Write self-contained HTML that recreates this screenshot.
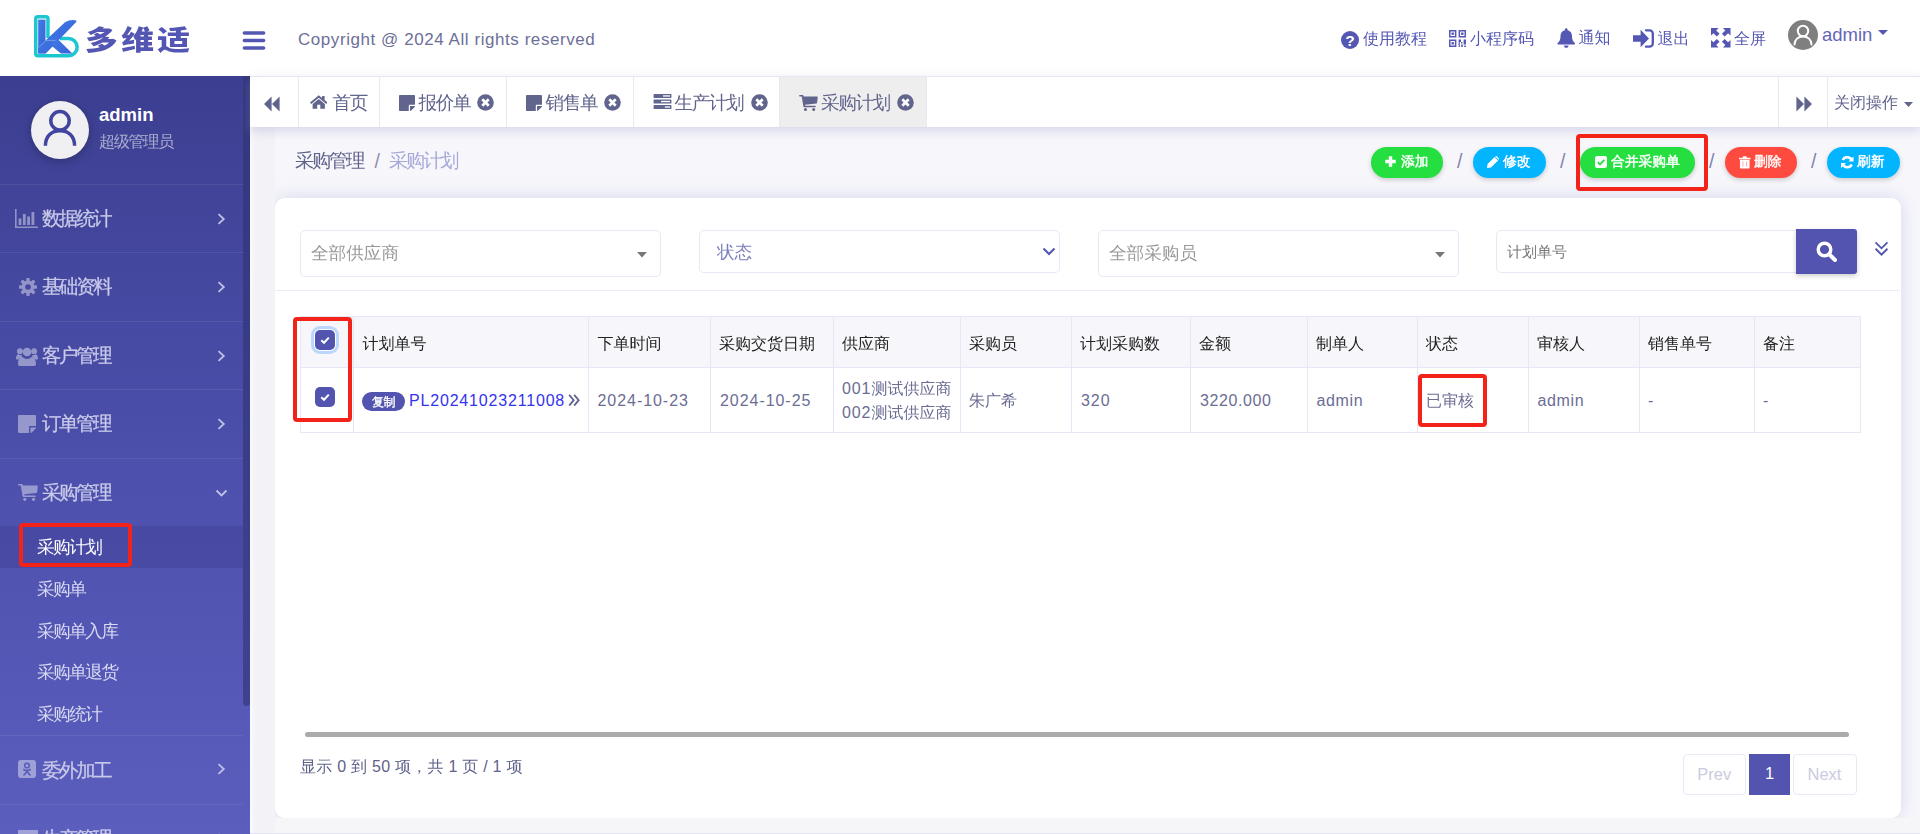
<!DOCTYPE html>
<html lang="zh-CN">
<head>
<meta charset="utf-8">
<title>采购计划</title>
<style>
*{box-sizing:border-box;margin:0;padding:0}
html,body{width:1920px;height:834px;overflow:hidden}
body{font-family:"Liberation Sans","WenQuanYi Zen Hei","Noto Sans CJK SC",sans-serif;background:#f3f2f6;color:#5b5d8a;position:relative}
.abs{position:absolute}
svg{display:block}
/* header */
#hdr{position:absolute;left:0;top:0;width:1920px;height:76px;background:#fff}
#logo-t{position:absolute;left:84.500px;top:20.500px;font-family:"Liberation Sans","Noto Sans CJK SC",sans-serif;font-weight:900;font-size:29px;line-height:40px;color:#5456b3;letter-spacing:3px;white-space:nowrap;transform-origin:0 50%;transform:scale(1.13,.94)}
#copy{position:absolute;left:298px;top:28px;font-size:17px;line-height:24px;color:#6d6f99;white-space:nowrap;letter-spacing:.56px}
.hl{position:absolute;top:27px;font-size:16px;line-height:24px;color:#5457b3;white-space:nowrap}
/* sidebar */
#side{position:absolute;left:0;top:76px;width:250px;height:758px;background:linear-gradient(180deg,#3c3e90 0%,#464aa2 33%,#5052b0 60%,#5b5ebd 100%);overflow:hidden}
#side .strip{position:absolute;left:243px;top:0;width:7px;height:630px;background:rgba(45,47,110,.55);border-radius:0 0 4px 4px}
.mi{position:absolute;left:0;width:243px;height:68.4px;border-top:1px solid rgba(255,255,255,.08)}
.mi .t{position:absolute;left:42px;top:20px;-webkit-text-stroke:.25px #c9caea;font-size:19.400px;letter-spacing:-2.300px;line-height:26px;color:#c9caea;white-space:nowrap}
.mi .ic{position:absolute;left:17px;top:24px}
.mi .ch{position:absolute;left:217px;top:27px}
.sub{position:absolute;left:37px;margin-top:0;font-size:17.600px;letter-spacing:-1.500px;line-height:22px;color:#d6d7f0;white-space:nowrap}
/* tabs */
#tabs{position:absolute;left:250px;top:76px;width:1670px;height:51px;background:#fff;border-top:1px solid #e6e6f5;box-shadow:0 4px 10px rgba(150,152,210,.35)}
.tb{position:absolute;top:0;height:50px;border-right:1px solid #e9e9f0;font-size:18.600px;letter-spacing:-1.400px;line-height:50px;color:#61648c;white-space:nowrap}
.tb .tx{position:absolute;top:1px}
/* crumbs */
#crumb{position:absolute;left:295px;top:148px;font-size:19.200px;letter-spacing:-2.100px;line-height:26px;color:#5f628a;white-space:nowrap}
.btn{position:absolute;top:147px;height:30.500px;border-radius:16px;color:#fff;font-size:13.750px;font-weight:bold;-webkit-text-stroke:.45px #fff;line-height:30px;white-space:nowrap;box-shadow:0 2px 5px rgba(0,0,0,.18)}
.btn span{position:absolute;top:0}
.sl{position:absolute;top:149.500px;font-size:19.500px;color:#8285ae;line-height:22px}
/* card */
#card{position:absolute;left:275px;top:197.500px;width:1625.500px;height:620px;background:#fff;border-radius:10px}
#clip{position:absolute;left:275px;top:127px;width:1645px;height:690.500px;overflow:hidden;background:#f7f7fb}
#below{position:absolute;left:275px;top:817.500px;width:1645px;height:16.500px;background:#f6f6f9}
#clip i{position:absolute;left:0;top:70.500px;width:1625.500px;height:620px;border-radius:10px;box-shadow:0 0 20px rgba(120,122,210,.26)}
#gut{position:absolute;left:250px;top:127px;width:25px;height:707px;background:linear-gradient(90deg,#fbfbfd 0,#f4f3f7 4px,#f3f2f6 8px)}
.inp{position:absolute;top:230px;height:45px;border:1px solid #e8e8f7;border-radius:5px;background:#fff;font-size:17px;line-height:43px;color:#999;white-space:nowrap}
table{border-collapse:collapse}
#tbl{position:absolute;left:300px;top:316px;width:1561px;font-size:16px}
.th{font-size:16px;line-height:24px;color:#222;white-space:nowrap}
.td{font-size:16px;line-height:24px;color:#6b6d94;white-space:nowrap}
.pg{top:754px;height:41px;line-height:39px;text-align:center;font-size:16.500px;border-radius:4px}
.redbox{position:absolute;border:4px solid #f4231a;border-radius:4px}
</style>
</head>
<body>
<div id="hdr">
<svg class="abs" style="left:30px;top:10px" width="52" height="52" viewBox="30 10 52 52">
<defs><linearGradient id="kg" x1="0" y1="0" x2="1" y2="1"><stop offset="0" stop-color="#3f7be6"/><stop offset="1" stop-color="#3a63d6"/></linearGradient></defs>
<path d="M47.950,38 V18.750 a2,2 0 0 0 -2,-2 h-8.200 a2,2 0 0 0 -2,2 v35.100 a2,2 0 0 0 2,2 H68.450 a8.700,8.700 0 0 0 0,-17.400 H60" fill="none" stroke="#1cc7d2" stroke-width="3.500" stroke-linejoin="round"/>
<rect x="38.200" y="19.600" width="7.300" height="33.800" fill="url(#kg)"/>
<path d="M38.200,53.400 V47.300 L65,22.300 Q70,19.300 76.300,20.400 Q76.800,21.300 76,22.300 L45.800,53.400 Z" fill="url(#kg)"/>
<path d="M50.500,45 L57,38.300 L72.300,53.400 H61 Z" fill="url(#kg)"/>
<path d="M38.500,47.600 L46,40.400 H55.500" fill="none" stroke="#9db8ef" stroke-width="0.600"/>
</svg>
<div id="logo-t">多维适</div>
<svg class="abs" style="left:242px;top:30px" width="24" height="21" viewBox="0 0 24 21"><g stroke="#5456b3" stroke-width="3.6" stroke-linecap="round"><path d="M2.4,3H21.6M2.4,10.5H21.6M2.4,18H21.6"/></g></svg>
<div id="copy">Copyright @ 2024 All rights reserved</div>
<svg class="abs" style="left:1341px;top:30.5px" width="18" height="18" viewBox="0 0 18 18"><circle cx="9" cy="9" r="9" fill="#5457b3"/><text x="9" y="14.500" text-anchor="middle" font-family="Liberation Sans,sans-serif" font-weight="bold" font-size="15.500" fill="#fff">?</text></svg>
<div class="hl" style="left:1363px">使用教程</div>
<svg class="abs" style="left:1449px;top:30px" width="17" height="17" viewBox="0 0 17 17" fill="#5457b3"><path d="M0,0h7.400v7.400h-7.400zM1.5,1.5v4.400h4.400v-4.400z" fill-rule="evenodd"/><rect x="2.5" y="2.5" width="2.400" height="2.400"/><path d="M9.6,0h7.400v7.400h-7.400zM11.1,1.5v4.400h4.400v-4.400z" fill-rule="evenodd"/><rect x="12.1" y="2.5" width="2.400" height="2.400"/><path d="M0,9.6h7.400v7.400h-7.400zM1.5,11.1v4.400h4.400v-4.400z" fill-rule="evenodd"/><rect x="2.5" y="12.1" width="2.400" height="2.400"/><path d="M9.600,9.600h2.400v2.400H9.600zM14.600,9.600h2.400v4.800h-2.400zM9.600,12h1.200v5H9.600zM12.200,14.400h1.600v2.600h-1.600zM15.200,15.600h1.800v1.400h-1.800zM12,12h1.400v1.400H12z"/></svg>
<div class="hl" style="left:1470px">小程序码</div>
<svg class="abs" style="left:1556.500px;top:27.500px" width="18.500" height="20" viewBox="0 0 19 20" fill="#5457b3"><path d="M9.500,0c0.800,0,1.400,0.600,1.400,1.400v0.600c2.900,0.700,4.500,3.100,4.500,6c0,3.800,1,5.700,2.900,7.200c0.500,0.400,0.300,1.500-0.500,1.500H1.200c-0.800,0-1-1.100-0.500-1.500c1.900-1.500,2.900-3.400,2.900-7.200c0-2.900,1.600-5.300,4.500-6V1.400C8.100,0.600,8.700,0,9.500,0z"/><path d="M7.200,17.600h4.600c0,1.300-1,2.400-2.300,2.400S7.200,18.900,7.200,17.600z"/></svg>
<div class="hl" style="left:1578.500px;top:25.500px">通知</div>
<svg class="abs" style="left:1632.500px;top:28.500px" width="21" height="19" viewBox="0 0 21 19"><path d="M0,6.300h7.600V0.800L16,9.500L7.600,18.200V12.700H0z" fill="#5457b3"/><path d="M13,1.300h3.500a3.300,3.300 0 0 1 3.300,3.300v9.800a3.300,3.300 0 0 1 -3.300,3.300H13" fill="none" stroke="#5457b3" stroke-width="2.300" stroke-linecap="round"/></svg>
<div class="hl" style="left:1657.500px">退出</div>
<svg class="abs" style="left:1711px;top:28px" width="19.500" height="19.500" viewBox="0 0 20 20" fill="#5457b3"><path d="M0,0H7.800L5.300,2.500L8.800,6L6,8.800L2.500,5.300L0,7.800z"/><g transform="translate(20,0) scale(-1,1)"><path d="M0,0H7.800L5.300,2.500L8.800,6L6,8.800L2.500,5.300L0,7.800z"/></g><g transform="translate(0,20) scale(1,-1)"><path d="M0,0H7.800L5.300,2.500L8.800,6L6,8.800L2.500,5.300L0,7.800z"/></g><g transform="translate(20,20) scale(-1,-1)"><path d="M0,0H7.800L5.300,2.500L8.800,6L6,8.800L2.500,5.300L0,7.800z"/></g></svg>
<div class="hl" style="left:1734px">全屏</div>
<svg class="abs" style="left:1788px;top:20px" width="30" height="30" viewBox="0 0 30 30"><circle cx="15" cy="15" r="15" fill="#7f7f7f"/><circle cx="15" cy="11" r="5.200" fill="none" stroke="#fff" stroke-width="2"/><path d="M6.500,24.500c0-5,3.800-8,8.500-8s8.500,3,8.500,8" fill="none" stroke="#fff" stroke-width="2" stroke-linecap="round"/></svg>
<div class="hl" style="left:1822px;top:22.500px;font-size:18.500px;color:#6466b8">admin</div>
<svg class="abs" style="left:1878px;top:30px" width="10" height="5" viewBox="0 0 10 5"><path d="M0,0h10L5,5z" fill="#5457b3"/></svg>
</div>
<div id="side">
<div class="strip"></div>
<svg class="abs" style="left:31px;top:25px;filter:drop-shadow(0 2px 4px rgba(0,0,0,.25))" width="58" height="58" viewBox="0 0 58 58"><circle cx="29" cy="29" r="29" fill="#f0f0f2"/><circle cx="29" cy="19.800" r="9.200" fill="none" stroke="#4245a0" stroke-width="3.500"/><path d="M14.400,44.700c0.200-9.800,6.200-15,14.600-15s14.400,5.200,14.600,15" fill="none" stroke="#4245a0" stroke-width="3.500" stroke-linecap="butt"/></svg>
<div class="abs" style="left:99px;top:26px;font-size:18.500px;font-weight:bold;line-height:26px;color:#fff">admin</div>
<div class="abs" style="left:99px;top:54px;font-size:16.200px;letter-spacing:-1.400px;line-height:22px;color:rgba(255,255,255,.55);white-space:nowrap">超级管理员</div>
<div class="mi" style="top:108px">
<svg class="ic" opacity=".42" style="left:15px;top:24px" width="23" height="19" viewBox="0 0 23 19" fill="#fff"><path d="M0,0h1.600v17.400H23V19H0z"/><rect x="3.600" y="9.500" width="2.800" height="6.500"/><rect x="7.900" y="5" width="2.800" height="11"/><rect x="12.200" y="7.500" width="2.800" height="8.500"/><rect x="16.500" y="3" width="2.800" height="13"/></svg>
<div class="t">数据统计</div>
<svg class="ch" style="left:217px;top:28px" width="9" height="12" viewBox="0 0 9 12"><path d="M1.500,1.200L6.800,6L1.500,10.800" fill="none" stroke="#bfc0e6" stroke-width="1.800"/></svg>
</div>
<div class="mi" style="top:176.4px">
<svg class="ic" opacity=".42" style="left:19px;top:25px" width="18" height="18" viewBox="0 0 18 18"><g fill="#fff"><circle cx="9" cy="9" r="6.400"/><g id="gt"><rect x="7.300" y="0" width="3.400" height="18" rx="0.800"/><rect x="7.300" y="0" width="3.400" height="18" rx="0.800" transform="rotate(45 9 9)"/><rect x="7.300" y="0" width="3.400" height="18" rx="0.800" transform="rotate(90 9 9)"/><rect x="7.300" y="0" width="3.400" height="18" rx="0.800" transform="rotate(135 9 9)"/></g></g><circle cx="9" cy="9" r="2.800" fill="#44479d"/></svg>
<div class="t">基础资料</div>
<svg class="ch" style="left:217px;top:28px" width="9" height="12" viewBox="0 0 9 12"><path d="M1.500,1.200L6.800,6L1.500,10.800" fill="none" stroke="#bfc0e6" stroke-width="1.800"/></svg>
</div>
<div class="mi" style="top:244.8px">
<svg class="ic" opacity=".42" style="left:16px;top:25px" width="22" height="19" viewBox="0 0 22 19" fill="#fff"><circle cx="11" cy="5" r="4.300"/><path d="M4,19c-1.300,0-2-0.800-2-2c0-3.800,1.800-7,4.500-7c1.200,1.200,2.800,1.900,4.500,1.900s3.300-0.700,4.500-1.900c2.700,0,4.500,3.200,4.500,7c0,1.200-0.700,2-2,2z"/><circle cx="3.900" cy="4.200" r="2.900"/><circle cx="18.100" cy="4.200" r="2.900"/><path d="M0,11.500c0-2.500,1-4.300,2.600-4.300c0.900,0.700,1.900,1,2.900,0.900c0,0.900,0.300,1.700,0.700,2.300c-1.500,0.100-2.700,0.900-3.500,2.100H1.500C0.600,12.500,0,12.200,0,11.500z"/><path d="M22,11.500c0-2.500-1-4.300-2.600-4.300c-0.900,0.700-1.900,1-2.900,0.900c0,0.900-0.300,1.700-0.700,2.300c1.500,0.100,2.700,0.900,3.500,2.100h1.200C21.400,12.500,22,12.200,22,11.500z"/></svg>
<div class="t">客户管理</div>
<svg class="ch" style="left:217px;top:28px" width="9" height="12" viewBox="0 0 9 12"><path d="M1.500,1.200L6.800,6L1.500,10.800" fill="none" stroke="#bfc0e6" stroke-width="1.800"/></svg>
</div>
<div class="mi" style="top:313.2px">
<svg class="ic" opacity=".42" style="left:18px;top:25px" width="18" height="18" viewBox="0 0 18 18" fill="#fff"><path d="M1.200,0h15.600c0.700,0,1.200,0.500,1.200,1.200V11h-5.800c-0.700,0-1.200,0.500-1.200,1.200V18H1.200C0.500,18,0,17.500,0,16.800V1.200C0,0.500,0.500,0,1.200,0z"/><path d="M12.400,12.400H18c-0.100,0.600-0.400,1.200-0.800,1.600l-3.200,3.200c-0.400,0.400-1,0.700-1.600,0.800z"/></svg>
<div class="t">订单管理</div>
<svg class="ch" style="left:217px;top:28px" width="9" height="12" viewBox="0 0 9 12"><path d="M1.500,1.200L6.800,6L1.500,10.800" fill="none" stroke="#bfc0e6" stroke-width="1.800"/></svg>
</div>
<div class="mi" style="top:381.6px">
<svg class="ic" opacity=".42" style="left:18px;top:25px" width="20" height="17" viewBox="0 0 20 17" fill="#fff"><path d="M0.700,0h3c0.700,0,0.900,0.500,1,1l0.100,0.500H19c0.600,0,0.900,0.400,0.800,0.900l-0.700,5.800c-0.100,0.500-0.400,0.700-0.800,0.800L6.300,10.300l0.200,1.200H17c0.500,0,0.800,0.300,0.800,0.750s-0.300,0.750-0.800,0.750H5.400c-0.400,0-0.700-0.300-0.800-0.700L2.800,1.500H0.700C0.300,1.500,0,1.200,0,0.750S0.300,0,0.700,0z"/><circle cx="6.800" cy="15.300" r="1.600"/><circle cx="15.500" cy="15.300" r="1.600"/></svg>
<div class="t">采购管理</div>
<svg class="ch" style="left:215px;top:30px" width="13" height="9" viewBox="0 0 13 9"><path d="M1.500,1.500L6.500,6.500L11.500,1.500" fill="none" stroke="#bfc0e6" stroke-width="1.800"/></svg>
</div>
<div class="mi" style="top:659.4px">
<svg class="ic" opacity=".42" style="left:18px;top:24px" width="18" height="18" viewBox="0 0 18 18"><rect width="18" height="18" rx="3" fill="#fff"/><circle cx="9" cy="5.600" r="2.300" fill="none" stroke="#595cba" stroke-width="1.500"/><path d="M5.800,9.500c2,1.400,4.400,1.400,6.400,0M9,10.800v1.200M9,11.500L6,15M9,11.500L12,15" fill="none" stroke="#595cba" stroke-width="1.600" stroke-linecap="round"/></svg>
<div class="t" style="top:21px">委外加工</div>
<svg class="ch" style="left:217px;top:27px" width="9" height="12" viewBox="0 0 9 12"><path d="M1.500,1.200L6.800,6L1.500,10.800" fill="none" stroke="#bfc0e6" stroke-width="1.800"/></svg>
</div>
<div class="mi" style="top:727.8px">
<svg class="ic" opacity=".42" style="left:18px;top:25px" width="20" height="17" viewBox="0 0 20 17" fill="#fff"><rect width="20" height="4"/><rect y="6" width="20" height="4"/><rect y="12" width="20" height="4"/></svg>
<div class="t">生产管理</div>
<svg class="ch" style="left:217px;top:28px" width="9" height="12" viewBox="0 0 9 12"><path d="M1.500,1.200L6.800,6L1.500,10.800" fill="none" stroke="#bfc0e6" stroke-width="1.800"/></svg>
</div>
<div class="abs" style="left:0;top:450px;width:243px;height:41.500px;background:rgba(40,42,110,.2)"></div>
<div class="sub" style="top:460.0px;color:#fff">采购计划</div>
<div class="sub" style="top:501.75px;color:#d9daf2">采购单</div>
<div class="sub" style="top:543.5px;color:#d9daf2">采购单入库</div>
<div class="sub" style="top:585.25px;color:#d9daf2">采购单退货</div>
<div class="sub" style="top:627.0px;color:#d9daf2">采购统计</div>
<div class="redbox" style="left:19px;top:446.500px;width:112.500px;height:44px"></div>
</div>
<div id="gut"></div><div id="clip"><i></i></div><div id="below"></div>
<div id="tabs">
<div class="tb" style="left:0;width:48.500px"><svg class="abs" style="left:13.500px;top:18.500px" width="16" height="16" viewBox="0 0 16 16" fill="#61648c"><path d="M7.600,0.500v15L0,8zM15.600,0.500v15L8,8z"/></svg></div>
<div class="tb" style="left:48.500px;width:81px"><svg class="abs" style="left:11px;top:18px" width="17.500" height="14" viewBox="0 0 18 14" fill="#61648c"><path d="M9,0L0,7.400l1.300,1.600L9,2.700l7.700,6.300l1.300-1.600L15,4.900V0.800h-2.600v2z"/><path d="M9,3.900L2.700,9.100V14h4.700v-4.100h3.200V14h4.700V9.100z"/></svg><span class="tx" style="left:34px">首页</span></div>
<div class="tb" style="left:129.500px;width:127px"><svg class="abs" style="left:19px;top:18px" width="16" height="16" viewBox="0 0 18 18" fill="#61648c"><path d="M1.200,0h15.600c0.700,0,1.200,0.500,1.200,1.200V11h-5.800c-0.700,0-1.200,0.500-1.200,1.200V18H1.200C0.500,18,0,17.500,0,16.800V1.200C0,0.500,0.500,0,1.200,0z"/><path d="M12.400,12.400H18c-0.100,0.600-0.400,1.200-0.800,1.600l-3.200,3.200c-0.400,0.400-1,0.700-1.600,0.800z"/></svg><span class="tx" style="left:39px">报价单</span><svg class="abs" style="left:97px;top:17px" width="17" height="17" viewBox="0 0 17 17"><circle cx="8.500" cy="8.500" r="8.300" fill="#61648c"/><path d="M5.300,5.300L11.700,11.700M11.700,5.300L5.300,11.700" stroke="#fff" stroke-width="2.700" stroke-linecap="butt"/></svg></div>
<div class="tb" style="left:256.500px;width:127px"><svg class="abs" style="left:19px;top:18px" width="16" height="16" viewBox="0 0 18 18" fill="#61648c"><path d="M1.200,0h15.600c0.700,0,1.200,0.500,1.200,1.200V11h-5.800c-0.700,0-1.200,0.500-1.200,1.200V18H1.200C0.500,18,0,17.500,0,16.800V1.200C0,0.500,0.500,0,1.200,0z"/><path d="M12.400,12.400H18c-0.100,0.600-0.400,1.200-0.800,1.600l-3.200,3.200c-0.400,0.400-1,0.700-1.600,0.800z"/></svg><span class="tx" style="left:39px">销售单</span><svg class="abs" style="left:97px;top:17px" width="17" height="17" viewBox="0 0 17 17"><circle cx="8.500" cy="8.500" r="8.300" fill="#61648c"/><path d="M5.300,5.300L11.700,11.700M11.700,5.300L5.300,11.700" stroke="#fff" stroke-width="2.700" stroke-linecap="butt"/></svg></div>
<div class="tb" style="left:383.500px;width:146.500px"><svg class="abs" style="left:19px;top:17px" width="19" height="15" viewBox="0 0 19 16" fill="#61648c"><rect width="19" height="4.200" rx="0.600"/><rect y="5.900" width="19" height="4.200" rx="0.600"/><rect y="11.800" width="19" height="4.200" rx="0.600"/><rect x="10" y="1.400" width="7.500" height="1.400" fill="#fff"/><rect x="8" y="7.300" width="9.500" height="1.400" fill="#fff"/><rect x="12" y="13.200" width="5.500" height="1.400" fill="#fff"/></svg><span class="tx" style="left:41px">生产计划</span><svg class="abs" style="left:117px;top:17px" width="17" height="17" viewBox="0 0 17 17"><circle cx="8.500" cy="8.500" r="8.300" fill="#61648c"/><path d="M5.300,5.300L11.700,11.700M11.700,5.300L5.300,11.700" stroke="#fff" stroke-width="2.700" stroke-linecap="butt"/></svg></div>
<div class="tb" style="left:530px;width:146.500px;background:#eeeeee"><svg class="abs" style="left:19px;top:18px" width="19" height="16" viewBox="0 0 20 17" fill="#61648c"><path d="M0.700,0h3c0.700,0,0.900,0.500,1,1l0.100,0.500H19c0.600,0,0.900,0.400,0.800,0.900l-0.700,5.800c-0.100,0.500-0.400,0.700-0.800,0.800L6.300,10.300l0.200,1.200H17c0.500,0,0.800,0.300,0.800,0.750s-0.300,0.750-0.800,0.750H5.400c-0.400,0-0.700-0.300-0.800-0.700L2.800,1.500H0.700C0.300,1.500,0,1.200,0,0.750S0.300,0,0.700,0z"/><circle cx="6.800" cy="15.300" r="1.600"/><circle cx="15.500" cy="15.300" r="1.600"/></svg><span class="tx" style="left:41px">采购计划</span><svg class="abs" style="left:117px;top:17px" width="17" height="17" viewBox="0 0 17 17"><circle cx="8.500" cy="8.500" r="8.300" fill="#61648c"/><path d="M5.300,5.300L11.700,11.700M11.700,5.300L5.300,11.700" stroke="#fff" stroke-width="2.700" stroke-linecap="butt"/></svg></div>
<div class="tb" style="left:1527.500px;width:50.500px;border-left:1px solid #e9e9f0"><svg class="abs" style="left:17px;top:19px" width="16" height="16" viewBox="0 0 16 16" fill="#61648c"><path d="M0.400,0.500v15L8,8zM8.400,0.500v15L16,8z"/></svg></div>
<div class="tb" style="left:1578px;width:92px;border-right:none"><span class="tx" style="left:6px;font-size:16px;letter-spacing:0">关闭操作</span><svg class="abs" style="left:75.500px;top:25px" width="9" height="5" viewBox="0 0 9 5"><path d="M0,0h9L4.500,5z" fill="#61648c"/></svg></div>
</div>
<div id="crumb">采购管理<span style="position:absolute;left:79.500px;top:0;color:#8d8fb4;letter-spacing:0;font-size:19.500px">/</span><span style="position:absolute;left:94px;top:0;color:#a5a8d8">采购计划</span></div>
<div class="btn" style="left:1371px;width:72px;background:#24df3f"><svg class="abs" style="left:14px;top:9.250px" width="11" height="11" viewBox="0 0 11 11"><path d="M5.500,0.300v10.400M0.300,5.500h10.400" stroke="#fff" stroke-width="3.400"/></svg><span style="left:30px">添加</span></div>
<div class="sl" style="left:1457px">/</div>
<div class="btn" style="left:1473px;width:73px;background:#03b5ff"><svg class="abs" style="left:14px;top:9.250px" width="12" height="12" viewBox="0 0 12 12" fill="#fff"><path d="M0,12l0.600-4L7.600,1l3.400,3.400L4,11.400zM8.400,0.300c0.400-0.400,1-0.400,1.400,0l1.900,1.900c0.400,0.400,0.400,1,0,1.400L11.500,3.800L8.200,0.500z"/></svg><span style="left:30px">修改</span></div>
<div class="sl" style="left:1560px">/</div>
<div class="btn" style="left:1580px;width:114.800px;background:#24df3f"><svg class="abs" style="left:15px;top:9.250px" width="12" height="12" viewBox="0 0 12 12"><rect width="12" height="12" rx="2.200" fill="#fff"/><path d="M2.800,6.200L5,8.400L9.300,3.800" fill="none" stroke="#24df3f" stroke-width="1.800"/></svg><span style="left:31px">合并采购单</span></div>
<div class="sl" style="left:1709px">/</div>
<div class="btn" style="left:1725px;width:72px;background:#ff4a40"><svg class="abs" style="left:14px;top:9px" width="11.500" height="12.500" viewBox="0 0 11 12" fill="#fff"><path d="M0,1.600h3.400L4,0.300h3l0.600,1.300H11v1.500H0z"/><path d="M0.900,3.600h9.200V11c0,0.600-0.400,1-1,1H1.900c-0.600,0-1-0.400-1-1z"/><path d="M3.700,5.200v5M7.300,5.200v5" stroke="#ff4a40" stroke-width="0.600" opacity=".75"/></svg><span style="left:29px">删除</span></div>
<div class="sl" style="left:1811px">/</div>
<div class="btn" style="left:1827px;width:73px;background:#03b5ff"><svg class="abs" style="left:14px;top:9px" width="12.500" height="12.500" viewBox="0 0 12 12" fill="none" stroke="#fff" stroke-width="2.500"><path d="M10.400,4.400A4.700,4.700 0 0 0 1.700,3.800M1.600,7.600A4.700,4.700 0 0 0 10.300,8.200"/><path d="M12,0.400v4.800H7.200zM0,11.600V6.800h4.800z" fill="#fff" stroke="none"/></svg><span style="left:30px">刷新</span></div>
<div class="redbox" style="left:1576px;top:134px;width:132px;height:57px"></div>
<div id="card"></div>
<div class="inp" style="left:300px;width:361px;height:46.500px"><span class="abs" style="left:10px;top:0;font-size:17.600px;line-height:44px">全部供应商</span><svg class="abs" style="left:335.500px;top:21px" width="10" height="5.500" viewBox="0 0 9 5"><path d="M0,0h9L4.500,5z" fill="#777"/></svg></div>
<div class="inp" style="left:699px;width:361px;height:43px"><span class="abs" style="left:17px;top:0;font-size:17.600px;line-height:43px;color:#7d7fba">状态</span><svg class="abs" style="left:342px;top:16px" width="14" height="9" viewBox="0 0 14 9"><path d="M1.500,1.500L7,7L12.500,1.500" fill="none" stroke="#5254b0" stroke-width="2"/></svg></div>
<div class="inp" style="left:1098px;width:361px;height:46.500px"><span class="abs" style="left:10px;top:0;font-size:17.600px;line-height:44px">全部采购员</span><svg class="abs" style="left:335.500px;top:21px" width="10" height="5.500" viewBox="0 0 9 5"><path d="M0,0h9L4.500,5z" fill="#777"/></svg></div>
<div class="inp" style="left:1496px;width:302px;height:43px;border-radius:5px 0 0 5px"><span class="abs" style="left:10px;top:0;font-size:15px;line-height:41px;color:#777">计划单号</span></div>
<div class="abs" style="left:1796px;top:229px;width:61px;height:45px;background:#5254b0;border-radius:0 3px 3px 0;box-shadow:0 2px 5px rgba(0,0,0,.2)"><svg class="abs" style="left:20px;top:12px" width="21" height="21" viewBox="0 0 21 21" fill="none" stroke="#fff"><circle cx="8.500" cy="8.500" r="6.300" stroke-width="3.400"/><path d="M13.300,13.300L19,19" stroke-width="4" stroke-linecap="round"/></svg></div>
<svg class="abs" style="left:1873.500px;top:241px" width="15" height="15.500" viewBox="0 0 16 17" fill="none" stroke="#5254b0" stroke-width="2"><path d="M1.500,1.500L8,8L14.500,1.500M1.500,8.500L8,15L14.500,8.500"/></svg>
<div class="abs" style="left:275px;top:290px;width:1625px;height:1px;background:#ebebf8"></div>
<div class="abs" style="left:300px;top:316px;width:1561px;height:52px;background:#f7f7fb"></div>
<div class="abs" style="left:300px;top:316px;width:1561px;height:117px;border:1px solid #e6e6f7"></div>
<div class="abs" style="left:300px;top:367px;width:1561px;height:1px;background:#e6e6f7"></div>
<div class="abs" style="left:353px;top:316px;width:1px;height:117px;background:#e6e6f7"></div>
<div class="abs" style="left:588px;top:316px;width:1px;height:117px;background:#e6e6f7"></div>
<div class="abs" style="left:710px;top:316px;width:1px;height:117px;background:#e6e6f7"></div>
<div class="abs" style="left:833px;top:316px;width:1px;height:117px;background:#e6e6f7"></div>
<div class="abs" style="left:960px;top:316px;width:1px;height:117px;background:#e6e6f7"></div>
<div class="abs" style="left:1071px;top:316px;width:1px;height:117px;background:#e6e6f7"></div>
<div class="abs" style="left:1190px;top:316px;width:1px;height:117px;background:#e6e6f7"></div>
<div class="abs" style="left:1307px;top:316px;width:1px;height:117px;background:#e6e6f7"></div>
<div class="abs" style="left:1417px;top:316px;width:1px;height:117px;background:#e6e6f7"></div>
<div class="abs" style="left:1528px;top:316px;width:1px;height:117px;background:#e6e6f7"></div>
<div class="abs" style="left:1639px;top:316px;width:1px;height:117px;background:#e6e6f7"></div>
<div class="abs" style="left:1754px;top:316px;width:1px;height:117px;background:#e6e6f7"></div>
<div class="abs th" style="top:332px;left:362.5px">计划单号</div>
<div class="abs th" style="top:332px;left:597.500px">下单时间</div>
<div class="abs th" style="top:332px;left:719px">采购交货日期</div>
<div class="abs th" style="top:332px;left:842px">供应商</div>
<div class="abs th" style="top:332px;left:969px">采购员</div>
<div class="abs th" style="top:332px;left:1080px">计划采购数</div>
<div class="abs th" style="top:332px;left:1199px">金额</div>
<div class="abs th" style="top:332px;left:1316px">制单人</div>
<div class="abs th" style="top:332px;left:1426px">状态</div>
<div class="abs th" style="top:332px;left:1537px">审核人</div>
<div class="abs th" style="top:332px;left:1648px">销售单号</div>
<div class="abs th" style="top:332px;left:1763px">备注</div>
<div class="abs td" style="left:597.500px;top:389px;letter-spacing:.95px">2024-10-23</div>
<div class="abs td" style="left:720px;top:389px;letter-spacing:.95px">2024-10-25</div>
<div class="abs td" style="left:969px;top:389px">朱广希</div>
<div class="abs td" style="left:1081px;top:389px;letter-spacing:.95px">320</div>
<div class="abs td" style="left:1200px;top:389px;letter-spacing:.6px">3220.000</div>
<div class="abs td" style="left:1316.500px;top:389px;letter-spacing:.64px">admin</div>
<div class="abs td" style="left:1426px;top:389px">已审核</div>
<div class="abs td" style="left:1537.500px;top:389px;letter-spacing:.64px">admin</div>
<div class="abs td" style="left:1648px;top:389px">-</div>
<div class="abs td" style="left:1763px;top:389px">-</div>
<div class="abs td" style="left:842px;top:377px;line-height:24px"><span style="letter-spacing:.9px">001</span>测试供应商<br><span style="letter-spacing:.9px">002</span>测试供应商</div>
<div class="abs" style="left:315px;top:330px;width:20px;height:20px;border-radius:5px;background:#5254b0;box-shadow:0 0 0 1px #fff,0 0 0 4px rgba(140,190,255,.55)"><svg class="abs" style="left:4px;top:5px" width="12" height="10" viewBox="0 0 12 10"><path d="M2.300,5.200L5,7.700L9.800,2.600" fill="none" stroke="#fff" stroke-width="2.100"/></svg></div>
<div class="abs" style="left:315px;top:387px;width:20px;height:20px;border-radius:5px;background:#5254b0"><svg class="abs" style="left:4px;top:5px" width="12" height="10" viewBox="0 0 12 10"><path d="M2.300,5.200L5,7.700L9.800,2.600" fill="none" stroke="#fff" stroke-width="2.100"/></svg></div>
<div class="redbox" style="left:292.500px;top:317px;width:59.500px;height:105px;border-width:4px"></div>
<div class="abs" style="left:362px;top:392px;width:43px;height:19px;border-radius:10px;background:#5254b0;color:#fff;font-size:12px;font-weight:bold;-webkit-text-stroke:.35px #fff;line-height:20px;text-align:center;letter-spacing:-0.500px">复制</div>
<div class="abs td" style="left:409px;top:389px;color:#3333ee;letter-spacing:.82px">PL20241023211008</div>
<svg class="abs" style="left:568px;top:393.800px" width="12" height="12.400" viewBox="0 0 12 12.400" fill="none" stroke="#5f628a" stroke-width="1.800"><path d="M1.200,0.800L5.700,6.200L1.200,11.600M6.200,0.800L10.700,6.200L6.200,11.600"/></svg>
<div class="redbox" style="left:1418px;top:373.500px;width:69px;height:53px"></div>
<div class="abs" style="left:305px;top:731.500px;width:1544px;height:5.500px;border-radius:3px;background:#aaa"></div>
<div class="abs td" style="left:300px;top:755px;color:#5f628a;letter-spacing:.25px">显示 0 到 50 项，共 1 页 / 1 项</div>
<div class="abs pg" style="left:1682.500px;width:63.500px;border:1px solid #e8e8f7;color:#c9cbe0">Prev</div>
<div class="abs pg" style="left:1749px;width:41px;background:#5254b0;color:#fff;border-radius:0">1</div>
<div class="abs pg" style="left:1792.500px;width:64px;border:1px solid #e8e8f7;color:#c9cbe0">Next</div>
<div class="abs" style="left:250px;top:833px;width:1670px;height:1px;background:#e3e3f3"></div>
</body>
</html>
